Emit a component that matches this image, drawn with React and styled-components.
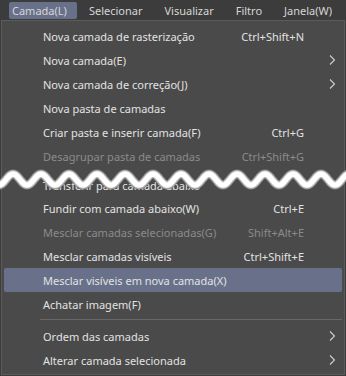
import React from "react";
import styled, { createGlobalStyle } from "styled-components";

const GlobalStyle = createGlobalStyle`
  html, body { margin: 0; padding: 0; background: #3c3c3c; }
  body { font-family: "Noto Sans", "Open Sans", sans-serif; font-size: 11px; }
  * { box-sizing: border-box; }
`;

const Page = styled.div`
  width: 346px;
  height: 376px;
  overflow: hidden;
  background: #3c3c3c;
`;

const MenuBar = styled.div`
  height: 20px;
  display: flex;
  align-items: stretch;
  padding: 2px 0 1px 9px;
  gap: 9px;
`;

const MenuTitle = styled.div`
  display: flex;
  align-items: center;
  padding: 0 10px 0 3px;
  color: #d6d6d6;
  border-radius: 2px;
  font-size: 11px;
  background: ${(p) => (p.$active ? "#687189" : "transparent")};
  white-space: nowrap;
`;

const Panel = styled.div`
  margin: 0 1px;
  border: 1px solid #5b5b5b;
  background: #4a4a4a;
  padding: 3px 2px 2px;
`;

const Row = styled.div`
  height: 24px;
  display: flex;
  align-items: center;
  padding-left: 39px;
  color: ${(p) => (p.$disabled ? "#8b8b8b" : "#e2e2e2")};
  background: ${(p) => (p.$highlight ? "#687189" : "transparent")};
  border-radius: 2px;
  white-space: nowrap;
`;

const Label = styled.span`
  flex: 1;
`;

const Shortcut = styled.span`
  text-align: right;
`;

const ArrowCell = styled.span`
  width: 38px;
  display: flex;
  justify-content: flex-end;
  padding-right: 6px;
`;

const Separator = styled.div`
  height: 1px;
  margin: 3px 0 4px 36px;
  background: #676767;
`;

const CutBlock = styled.div`
  position: relative;
  height: 28px;
  padding-top: 5px;
`;

const WaveSvg = styled.svg`
  position: absolute;
  left: -4px;
  top: 0;
`;

const Chevron = () => (
  <svg width="7" height="10" viewBox="0 0 7 10">
    <path d="M1 0.5 L5.5 5 L1 9.5" fill="none" stroke="#cfcfcf" strokeWidth="1.1" />
  </svg>
);

const Wave = () => {
  const pts = [];
  for (let x = -4; x <= 350; x += 1) {
    const y = 11.5 - 5.5 * Math.cos((2 * Math.PI * (x - 13)) / 28);
    pts.push(`${x},${y.toFixed(2)}`);
  }
  const d = pts.join(" ");
  return (
    <WaveSvg width="346" height="24" viewBox="0 0 346 24">
      <polyline points={d} fill="none" stroke="#8a8a8a" strokeWidth="9" />
      <polyline points={d} fill="none" stroke="#b8b8b8" strokeWidth="7.5" />
      <polyline points={d} fill="none" stroke="#ffffff" strokeWidth="5.5" />
    </WaveSvg>
  );
};

const MenuItem = ({ label, shortcut, sub, disabled, highlight }) => (
  <Row $disabled={disabled} $highlight={highlight}>
    <Label>{label}</Label>
    {shortcut && <Shortcut>{shortcut}</Shortcut>}
    <ArrowCell>{sub && <Chevron />}</ArrowCell>
  </Row>
);

const top = [
  { label: "Nova camada de rasterização", shortcut: "Ctrl+Shift+N" },
  { label: "Nova camada(E)", sub: true },
  { label: "Nova camada de correção(J)", sub: true },
  { label: "Nova pasta de camadas" },
  { label: "Criar pasta e inserir camada(F)", shortcut: "Ctrl+G" },
  { label: "Desagrupar pasta de camadas", shortcut: "Ctrl+Shift+G", disabled: true },
];

const middle = [
  { label: "Fundir com camada abaixo(W)", shortcut: "Ctrl+E" },
  { label: "Mesclar camadas selecionadas(G)", shortcut: "Shift+Alt+E", disabled: true },
  { label: "Mesclar camadas visíveis", shortcut: "Ctrl+Shift+E" },
  { label: "Mesclar visíveis em nova camada(X)", highlight: true },
  { label: "Achatar imagem(F)" },
];

const bottom = [
  { label: "Ordem das camadas", sub: true },
  { label: "Alterar camada selecionada", sub: true },
];

export default function App() {
  return (
    <Page>
      <GlobalStyle />
      <MenuBar>
        <MenuTitle $active>Camada(L)</MenuTitle>
        <MenuTitle>Selecionar</MenuTitle>
        <MenuTitle>Visualizar</MenuTitle>
        <MenuTitle>Filtro</MenuTitle>
        <MenuTitle>Janela(W)</MenuTitle>
      </MenuBar>
      <Panel>
        {top.map((it) => (
          <MenuItem key={it.label} {...it} />
        ))}
        <CutBlock>
          <MenuItem label="Transferir para camada abaixo" />
          <Wave />
        </CutBlock>
        {middle.map((it) => (
          <MenuItem key={it.label} {...it} />
        ))}
        <Separator />
        {bottom.map((it) => (
          <MenuItem key={it.label} {...it} />
        ))}
      </Panel>
    </Page>
  );
}
